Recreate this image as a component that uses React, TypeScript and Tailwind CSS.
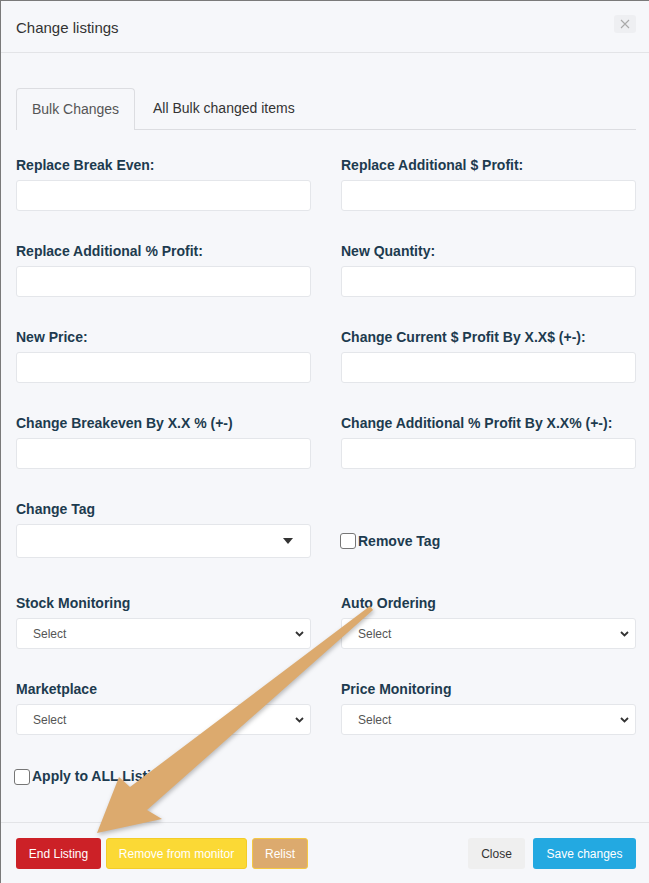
import React from 'react';

const font = { fontFamily: '"Liberation Sans", Arial, sans-serif' };

const textFields = [
  ['Replace Break Even:', 'Replace Additional $ Profit:'],
  ['Replace Additional % Profit:', 'New Quantity:'],
  ['New Price:', 'Change Current $ Profit By X.X$ (+-):'],
  ['Change Breakeven By X.X % (+-)', 'Change Additional % Profit By X.X% (+-):'],
];

const Label: React.FC<{ children: React.ReactNode }> = ({ children }) => (
  <div className="h-5 mb-[5px] flex items-center text-[14px] font-bold text-[#1d3b4f] pt-[1px]">{children}</div>
);

const TextInput = () => (
  <div className="h-[31px] bg-white border border-[#e4e6ea] rounded-[3px]" />
);

const SelectBox = () => (
  <div className="h-[31px] bg-white border border-[#e4e6ea] rounded-[3px] flex items-center justify-between pl-[16px] pr-[6px]">
    <span className="text-[12px] text-[#555]">Select</span>
    <svg width="9" height="6" viewBox="0 0 9 6" fill="none">
      <path d="M1 1l3.5 3.5L8 1" stroke="#333" strokeWidth="1.8" />
    </svg>
  </div>
);

const Checkbox = () => (
  <input
    type="checkbox"
    className="appearance-none w-4 h-4 bg-white border border-[#767676] rounded-[3px] shrink-0"
  />
);

const selectFields = [
  ['Stock Monitoring', 'Auto Ordering'],
  ['Marketplace', 'Price Monitoring'],
];

export default function App() {
  return (
    <div className="relative w-[649px] h-[883px] bg-[#f6f7fa] border-l border-t border-[#7a7a7a] overflow-hidden" style={font}>
      {/* header */}
      <div className="h-[52px] border-b border-[#e3e4e7] flex items-center justify-between pl-[15px] pr-[13px]">
        <h4 className="text-[15px] text-[#333] mt-[3px]">Change listings</h4>
        <button className="w-[22px] h-[18px] rounded-[3px] bg-[#eeeff2] flex items-center justify-center -mt-[5px]">
          <svg width="10" height="10" viewBox="0 0 10 10">
            <path d="M1 1l8 8M9 1l-8 8" stroke="#aaa" strokeWidth="1.1" />
          </svg>
        </button>
      </div>

      {/* body */}
      <div className="pl-[15px] pr-[13px] pt-[35px] h-[769px]">
        <div className="flex border-b border-[#dcdde1] h-[42px]">
          <div className="w-[119px] border border-b-0 border-[#dcdde1] rounded-t-[4px] flex items-center justify-center text-[14px] text-[#555] bg-[#f6f7fa] -mb-px">
            Bulk Changes
          </div>
          <div className="pl-[18px] flex items-center text-[14px] text-[#333]">All Bulk changed items</div>
        </div>

        <div className="pt-[25px] grid grid-cols-2 gap-x-[30px] gap-y-[30px]">
          {textFields.flat().map((l) => (
            <div key={l}>
              <Label>{l}</Label>
              <TextInput />
            </div>
          ))}
          <div>
            <Label>Change Tag</Label>
            <div className="h-[34px] bg-white border border-[#e4e6ea] rounded-[3px] flex items-center justify-end pr-[17px]">
              <svg width="10" height="6" viewBox="0 0 10 6">
                <path d="M0 0h10L5 6z" fill="#333" />
              </svg>
            </div>
          </div>
          <div className="flex items-center pt-[25px] -ml-[1px]">
            <Checkbox />
            <span className="ml-[2px] text-[14px] font-bold text-[#1d3b4f]">Remove Tag</span>
          </div>
        </div>

        <div className="pt-[35px] grid grid-cols-2 gap-x-[30px] gap-y-[30px]">
          {selectFields.flat().map((l) => (
            <div key={l}>
              <Label>{l}</Label>
              <SelectBox />
            </div>
          ))}
        </div>

        <div className="flex items-center mt-[31px] -ml-[2px]">
          <Checkbox />
          <span className="ml-[2px] text-[14px] font-bold text-[#1d3b4f]">Apply to ALL Listings</span>
        </div>
      </div>

      {/* footer */}
      <div className="border-t border-[#e3e4e7] h-[61px] flex items-center justify-between pl-[15px] pr-[13px] pt-[1px] text-[12px]">
        <div className="flex gap-[5px]">
          <button className="h-[31px] w-[85px] rounded-[3px] bg-[#cc2127] text-white">End Listing</button>
          <button className="h-[31px] w-[141px] rounded-[3px] bg-[#fbd935] border border-[#f3cc28] text-white">Remove from monitor</button>
          <button className="h-[31px] w-[56px] rounded-[3px] bg-[#dcaa6e] border border-[#f5c842] text-white">Relist</button>
        </div>
        <div className="flex gap-[8px]">
          <button className="h-[31px] w-[57px] rounded-[3px] bg-[#efefef] text-[#333]">Close</button>
          <button className="h-[31px] w-[103px] rounded-[3px] bg-[#23a9e1] text-white">Save changes</button>
        </div>
      </div>

      {/* annotation arrow */}
      <svg className="absolute left-0 top-0 pointer-events-none" width="649" height="883" style={{ filter: 'drop-shadow(1px 2px 2px rgba(0,0,0,0.25))' }}>
        <polygon
          points="369,605 372,609 146,809 161,818 96,832 118,776 129,786"
          fill="#dcaa6e"
        />
      </svg>
    </div>
  );
}
